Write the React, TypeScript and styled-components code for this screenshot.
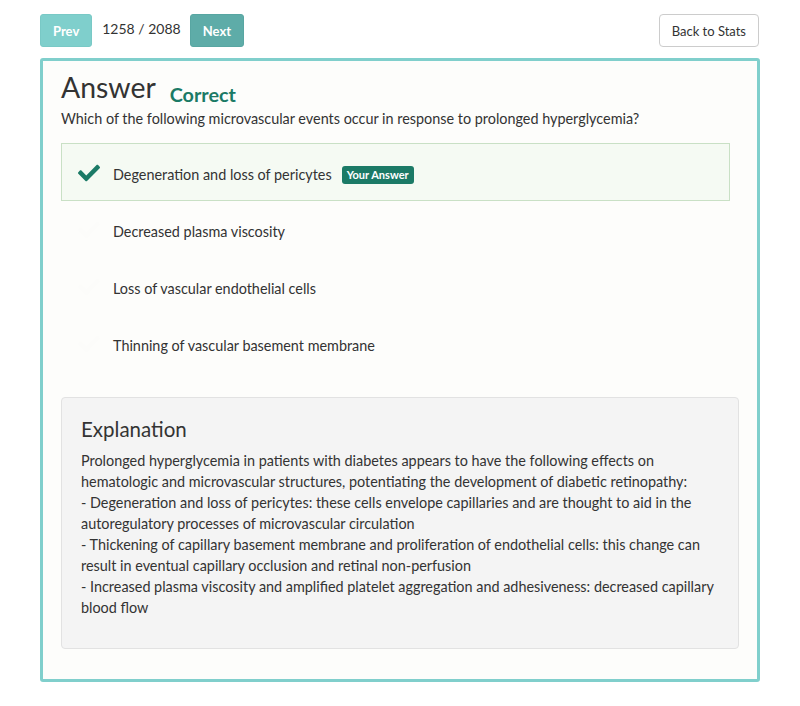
import React from "react";
import styled, { createGlobalStyle } from "styled-components";
import { FaCheck } from "react-icons/fa";

const Global = createGlobalStyle`
  html, body { margin: 0; padding: 0; background: #ffffff; }
  body { font-family: Lato, "Open Sans", sans-serif; color: #333333; }
  * { box-sizing: border-box; }
`;

const Page = styled.div`
  width: 720px;
  margin: 0 auto;
  padding-top: 14px;
`;

const TopBar = styled.div`
  display: flex;
  align-items: center;
  height: 33px;
`;

const NavButton = styled.button<{ $dark?: boolean }>`
  height: 33px;
  padding: 0 12px;
  border: 1px solid ${(p) => (p.$dark ? "#58a6a2" : "#79c9c6")};
  border-radius: 3px;
  background: ${(p) => (p.$dark ? "#5eaca8" : "#7fcfcc")};
  color: #ffffff;
  font-family: Lato, sans-serif;
  font-weight: 700;
  font-size: 13px;
`;

const Counter = styled.span`
  font-size: 14px;
  margin: 0 9px 0 10px;
  color: #333;
  position: relative;
  top: -2px;
`;

const BackButton = styled.button`
  margin-left: auto;
  margin-right: 1px;
  height: 33px;
  padding: 0 12px;
  border: 1px solid #cccccc;
  border-radius: 4px;
  background: #ffffff;
  color: #333;
  font-family: Lato, sans-serif;
  font-size: 13px;
`;

const Card = styled.div`
  margin-top: 11px;
  border: 3px solid #80cfcc;
  border-radius: 3px;
  background: #fdfdfb;
  padding: 7px 18px 30px 18px;
`;

const HeaderRow = styled.div`
  display: flex;
  align-items: baseline;
`;

const Title = styled.h1`
  margin: 0;
  font-size: 28.4px;
  font-weight: 400;
  line-height: 38px;
  color: #333;
`;

const Verdict = styled.span`
  margin-left: 14px;
  font-size: 19.8px;
  font-weight: 700;
  color: #1b7a66;
  position: relative;
  top: 4px;
`;

const Question = styled.p`
  margin: 3px 0 14px 0;
  font-size: 14.4px;
  line-height: 20px;
`;

const Options = styled.div`
  margin-right: 9px;
  display: flex;
  flex-direction: column;
`;

const Option = styled.div<{ $selected?: boolean }>`
  display: flex;
  align-items: center;
  height: 58px;
  margin-bottom: -1px;
  padding: 5px 0 0 16px;
  border: 1px solid ${(p) => (p.$selected ? "#c9e0c5" : "transparent")};
  background: ${(p) => (p.$selected ? "#f5faf3" : "transparent")};
  font-size: 14.4px;
`;

const IconSlot = styled.span<{ $on?: boolean }>`
  width: 35px;
  display: flex;
  align-items: center;
  position: relative;
  top: -2px;
  color: ${(p) => (p.$on ? "#1b7a66" : "#fcfcfa")};
`;

const Badge = styled.span`
  margin-left: 10px;
  padding: 3px 5px;
  border-radius: 3px;
  background: #1b7a66;
  color: #fff;
  font-size: 11px;
  font-weight: 700;
  line-height: 12px;
`;

const Explanation = styled.div`
  margin-top: 26px;
  background: #f4f4f4;
  border: 1px solid #e2e2e2;
  border-radius: 4px;
  padding: 17px 19px 30px 19px;
`;

const ExpTitle = styled.h2`
  margin: 0 0 7px 0;
  font-size: 20.5px;
  font-weight: 400;
  line-height: 28px;
  color: #333;
`;

const ExpText = styled.p`
  margin: 0;
  font-size: 14.4px;
  line-height: 21px;
  color: #333;
`;

const options = [
  "Degeneration and loss of pericytes",
  "Decreased plasma viscosity",
  "Loss of vascular endothelial cells",
  "Thinning of vascular basement membrane",
];

export default function App() {
  return (
    <>
      <Global />
      <Page>
        <TopBar>
          <NavButton>Prev</NavButton>
          <Counter>1258 / 2088</Counter>
          <NavButton $dark>Next</NavButton>
          <BackButton>Back to Stats</BackButton>
        </TopBar>
        <Card>
          <HeaderRow>
            <Title>Answer</Title>
            <Verdict>Correct</Verdict>
          </HeaderRow>
          <Question>
            Which of the following microvascular events occur in response to prolonged hyperglycemia?
          </Question>
          <Options>
            {options.map((o, i) => (
              <Option key={o} $selected={i === 0}>
                <IconSlot $on={i === 0}>
                  <FaCheck size={22} />
                </IconSlot>
                {o}
                {i === 0 && <Badge>Your Answer</Badge>}
              </Option>
            ))}
          </Options>
          <Explanation>
            <ExpTitle>Explanation</ExpTitle>
            <ExpText>
              Prolonged hyperglycemia in patients with diabetes appears to have the following effects on
              hematologic and microvascular structures, potentiating the development of diabetic retinopathy:
              <br />- Degeneration and loss of pericytes: these cells envelope capillaries and are thought to aid in the
              autoregulatory processes of microvascular circulation
              <br />- Thickening of capillary basement membrane and proliferation of endothelial cells: this change can
              result in eventual capillary occlusion and retinal non-perfusion
              <br />- Increased plasma viscosity and amplified platelet aggregation and adhesiveness: decreased capillary
              blood flow
            </ExpText>
          </Explanation>
        </Card>
      </Page>
    </>
  );
}
